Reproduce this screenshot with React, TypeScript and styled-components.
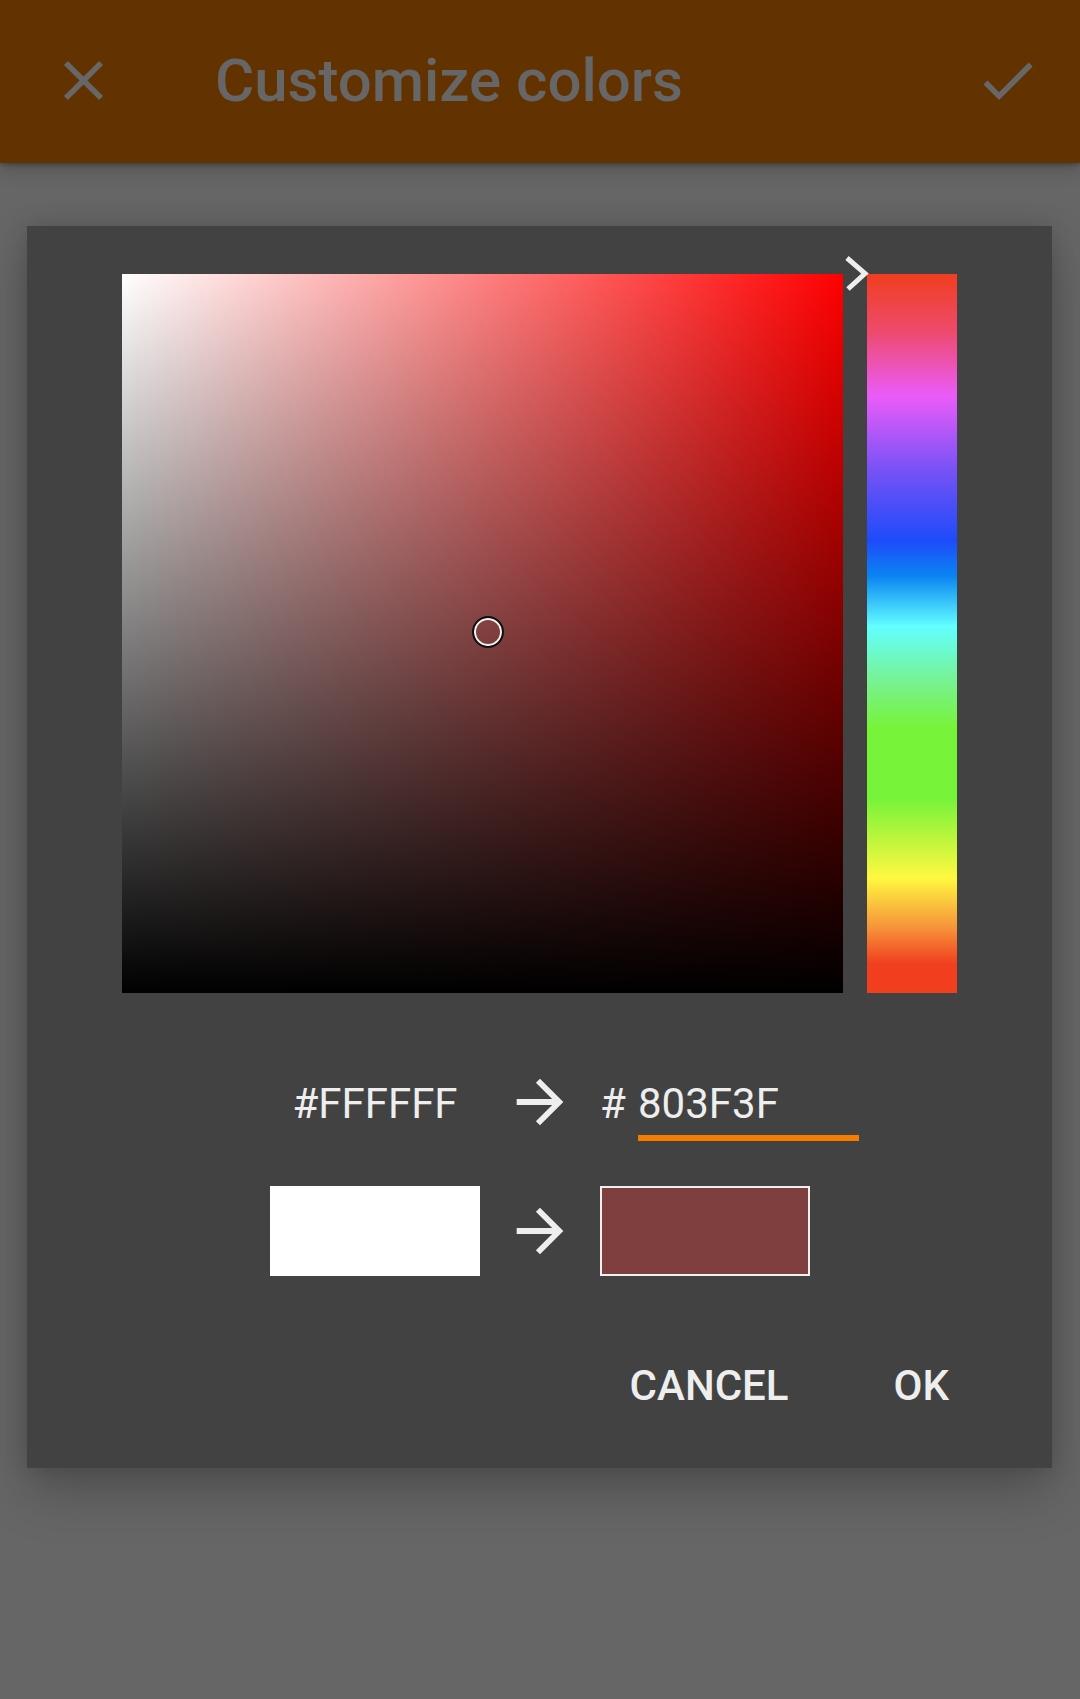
import React from "react";
import styled, { createGlobalStyle } from "styled-components";

const GlobalStyle = createGlobalStyle`
  html, body {
    margin: 0;
    padding: 0;
    background: #666666;
  }
  body {
    font-family: Roboto, "Noto Sans", "Liberation Sans", sans-serif;
    min-height: 1699px;
  }
`;

const AppBar = styled.header`
  position: relative;
  z-index: 1;
  height: 163px;
  box-sizing: border-box;
  padding: 0 39px 2px 50px;
  display: flex;
  align-items: center;
  background: #623200;
  box-shadow: 0 2px 4px rgba(0, 0, 0, 0.25), 0 6px 18px rgba(0, 0, 0, 0.2);
`;

const BarIcon = styled.svg`
  width: 67px;
  height: 67px;
  flex: none;
  fill: #676767;
`;

const Title = styled.h1`
  flex: 1;
  margin: 0 0 0 98px;
  font-size: 60px;
  font-weight: 500;
  line-height: 70px;
  color: #666666;
`;

const Dialog = styled.section`
  margin: 63px 0 0 27px;
  width: 1025px;
  box-sizing: border-box;
  padding: 48px 0 58px;
  background: #424242;
  box-shadow: 0 24px 48px rgba(0, 0, 0, 0.22), 0 0 22px rgba(0, 0, 0, 0.14);
  color: #eeeeee;
`;

const Picker = styled.div`
  display: flex;
  gap: 24px;
  padding: 0 95px;
`;

const SatValSquare = styled.div<{ $hue: string }>`
  position: relative;
  width: 721px;
  height: 719px;
  background:
    linear-gradient(to top, #000 0%, rgba(0, 0, 0, 0) 100%),
    linear-gradient(to right, #fff 0%, ${(p) => p.$hue} 100%);
`;

const Thumb = styled.div`
  position: absolute;
  width: 32px;
  height: 32px;
  box-sizing: border-box;
  border-radius: 50%;
  border: 2.5px solid #111;
  box-shadow: inset 0 0 0 2px #f4f4f4;
  transform: translate(-50%, -50%);
`;

const HueColumn = styled.div`
  position: relative;
  width: 90px;
  height: 719px;
  background: linear-gradient(
    to bottom,
    #f03e1f 0%,
    #ee4a6c 8%,
    #ea5cf9 17%,
    #7a52f6 27%,
    #1e4bfa 37%,
    #0a84f2 42%,
    #62ffff 49%,
    #78f28c 57%,
    #77f33a 63%,
    #77f33a 73%,
    #fff840 84%,
    #f6923a 91%,
    #f03e1f 96%,
    #f03e1f 100%
  );
`;

const HueMarker = styled.svg`
  position: absolute;
  left: -24px;
  top: -20px;
  width: 26px;
  height: 40px;
  overflow: visible;
`;

const SwatchGrid = styled.div<{ $align: string; $top: number }>`
  display: grid;
  grid-template-columns: 210px 70px 260px;
  column-gap: 25px;
  margin: ${(p) => p.$top}px 0 0 243px;
  align-items: ${(p) => p.$align};
`;

const HexText = styled.div`
  margin-top: 12px;
  text-align: center;
  font-size: 42px;
  line-height: 49px;
`;

const ArrowIcon = styled.svg`
  width: 70px;
  height: 70px;
  fill: #eeeeee;
`;

const HexField = styled.div`
  margin-top: 12px;
  display: flex;
  font-size: 42px;
  line-height: 49px;
`;

const HashSign = styled.span`
  width: 38px;
`;

const HexInput = styled.div`
  width: 221px;
  padding-bottom: 7px;
  border-bottom: 6px solid #f57c00;
`;

const Swatch = styled.div<{ $color: string; $outlined?: boolean }>`
  width: 210px;
  height: 90px;
  box-sizing: border-box;
  background: ${(p) => p.$color};
  border: ${(p) => (p.$outlined ? "2px solid #f0f0f0" : "none")};
`;

const Actions = styled.div`
  display: flex;
  justify-content: flex-end;
  gap: 105px;
  margin-top: 85px;
  padding-right: 103px;
`;

const TextButton = styled.button`
  border: none;
  background: none;
  padding: 0;
  font-family: inherit;
  font-size: 42px;
  font-weight: 500;
  line-height: 49px;
  color: #eeeeee;
`;

const CLOSE = "M19 6.41L17.59 5 12 10.59 6.41 5 5 6.41 10.59 12 5 17.59 6.41 19 12 13.41 17.59 19 19 17.59 13.41 12z";
const CHECK = "M9 16.17L4.83 12l-1.42 1.41L9 19 21 7l-1.41-1.41z";
const ARROW = "M12 4l-1.41 1.41L16.17 11H4v2h12.17l-5.58 5.59L12 20l8-8z";

const Arrow = () => (
  <ArrowIcon viewBox="0 0 24 24">
    <path d={ARROW} />
  </ArrowIcon>
);

export default function App() {
  const sat = 0.507;
  const val = 0.502;

  return (
    <>
      <GlobalStyle />
      <AppBar>
        <BarIcon viewBox="0 0 24 24">
          <path d={CLOSE} />
        </BarIcon>
        <Title>Customize colors</Title>
        <BarIcon viewBox="0 0 24 24">
          <path d={CHECK} />
        </BarIcon>
      </AppBar>

      <Dialog>
        <Picker>
          <SatValSquare $hue="#ff0000">
            <Thumb style={{ left: `${sat * 100}%`, top: `${(1 - val) * 100}%` }} />
          </SatValSquare>
          <HueColumn>
            <HueMarker viewBox="0 0 26 40">
              <polyline points="4,4 22,19.5 5,35" fill="none" stroke="#eeeeee" strokeWidth="5" />
            </HueMarker>
          </HueColumn>
        </Picker>

        <SwatchGrid $align="start" $top={74}>
          <HexText>#FFFFFF</HexText>
          <Arrow />
          <HexField>
            <HashSign>#</HashSign>
            <HexInput>803F3F</HexInput>
          </HexField>
        </SwatchGrid>

        <SwatchGrid $align="center" $top={45}>
          <Swatch $color="#ffffff" />
          <Arrow />
          <Swatch $color="#803f3f" $outlined />
        </SwatchGrid>

        <Actions>
          <TextButton>CANCEL</TextButton>
          <TextButton>OK</TextButton>
        </Actions>
      </Dialog>
    </>
  );
}
